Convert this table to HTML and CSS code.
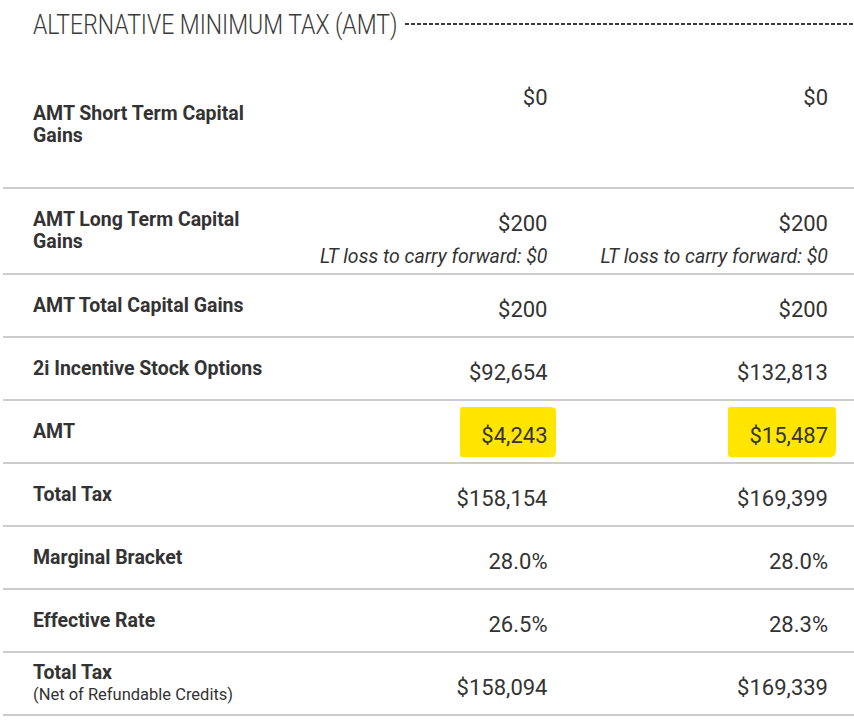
FILE: index.html
```html
<!DOCTYPE html>
<html lang="en">
<head>
<meta charset="utf-8">
<title>Alternative Minimum Tax (AMT)</title>
<link rel="stylesheet" href="styles.css">
</head>
<body>
<div class="page">
  <div class="head">
    <h2 class="title"><span class="title-text">ALTERNATIVE MINIMUM TAX (AMT)</span></h2>
    <div class="dash"></div>
  </div>
  <div class="table">
    <div class="row row-first">
      <div class="label">AMT Short Term Capital Gains</div>
      <div class="val">$0</div>
      <div class="val">$0</div>
    </div>
    <div class="row row-second">
      <div class="label">AMT Long Term Capital Gains</div>
      <div class="val">$200<span class="note">LT loss to carry forward: $0</span></div>
      <div class="val">$200<span class="note">LT loss to carry forward: $0</span></div>
    </div>
    <div class="row">
      <div class="label">AMT Total Capital Gains</div>
      <div class="val">$200</div>
      <div class="val">$200</div>
    </div>
    <div class="row">
      <div class="label">2i Incentive Stock Options</div>
      <div class="val">$92,654</div>
      <div class="val">$132,813</div>
    </div>
    <div class="row">
      <div class="label">AMT</div>
      <div class="val"><span class="hl hl-a">$4,243</span></div>
      <div class="val"><span class="hl hl-b">$15,487</span></div>
    </div>
    <div class="row">
      <div class="label">Total Tax</div>
      <div class="val">$158,154</div>
      <div class="val">$169,399</div>
    </div>
    <div class="row">
      <div class="label">Marginal Bracket</div>
      <div class="val">28.0%</div>
      <div class="val">28.0%</div>
    </div>
    <div class="row">
      <div class="label">Effective Rate</div>
      <div class="val">26.5%</div>
      <div class="val">28.3%</div>
    </div>
    <div class="row">
      <div class="label">Total Tax<span class="sub">(Net of Refundable Credits)</span></div>
      <div class="val">$158,094</div>
      <div class="val">$169,339</div>
    </div>
  </div>
</div>
</body>
</html>
```

FILE: styles.css
```css
html, body {
  margin: 0;
  padding: 0;
  background: #ffffff;
}

body {
  font-family: Roboto, "Liberation Sans", Arial, sans-serif;
  color: #333333;
  overflow: hidden;
}

.page {
  width: 854px;
}

.head {
  display: flex;
  align-items: flex-start;
  height: 63px;
  box-sizing: border-box;
  padding-top: 8px;
  padding-left: 33px;
}

.title {
  margin: 0;
  width: 362px;
  flex: none;
  font-size: 28px;
  line-height: 34px;
  font-weight: 300;
  color: #3a3a3a;
  white-space: nowrap;
}

.title-text {
  display: inline-block;
  transform: scaleX(0.82);
  transform-origin: left center;
}

.dash {
  flex: 1;
  height: 2px;
  margin-top: 15px;
  margin-left: 10px;
  background: repeating-linear-gradient(90deg, #3a3a3a 0 4px, transparent 4px 6px);
}

.table {
  margin-left: 3px;
}

.row {
  display: grid;
  grid-template-columns: 234px 1fr 1fr;
  align-items: center;
  height: 63px;
  box-sizing: border-box;
  padding: 0 26px 0 30px;
  border-bottom: 2px solid #cccccc;
  isolation: isolate;
}

.row-first {
  height: 126px;
}

.row-second {
  height: 86px;
}

.label {
  font-size: 19.5px;
  line-height: 22px;
  font-weight: 700;
  color: #333333;
}

.sub {
  display: block;
  font-size: 16.5px;
  line-height: 22px;
  font-weight: 400;
}

.val {
  align-self: start;
  padding-top: 22px;
  text-align: right;
  font-size: 22px;
  line-height: 26px;
  font-weight: 400;
  color: #333333;
}

.note {
  display: block;
  margin-top: 9px;
  font-size: 19.5px;
  line-height: 22px;
  font-style: italic;
  white-space: nowrap;
}

.hl {
  position: relative;
  display: inline-block;
}

.hl::before {
  content: "";
  position: absolute;
  top: -16px;
  bottom: -8px;
  left: -21px;
  right: -8px;
  background: #ffe500;
  z-index: -1;
}

.hl-a::before {
  border-radius: 2px 6px 3px 2px / 5px 3px 6px 3px;
}

.hl-b::before {
  border-radius: 2px 3px 5px 2px / 3px 4px 6px 4px;
}
```
